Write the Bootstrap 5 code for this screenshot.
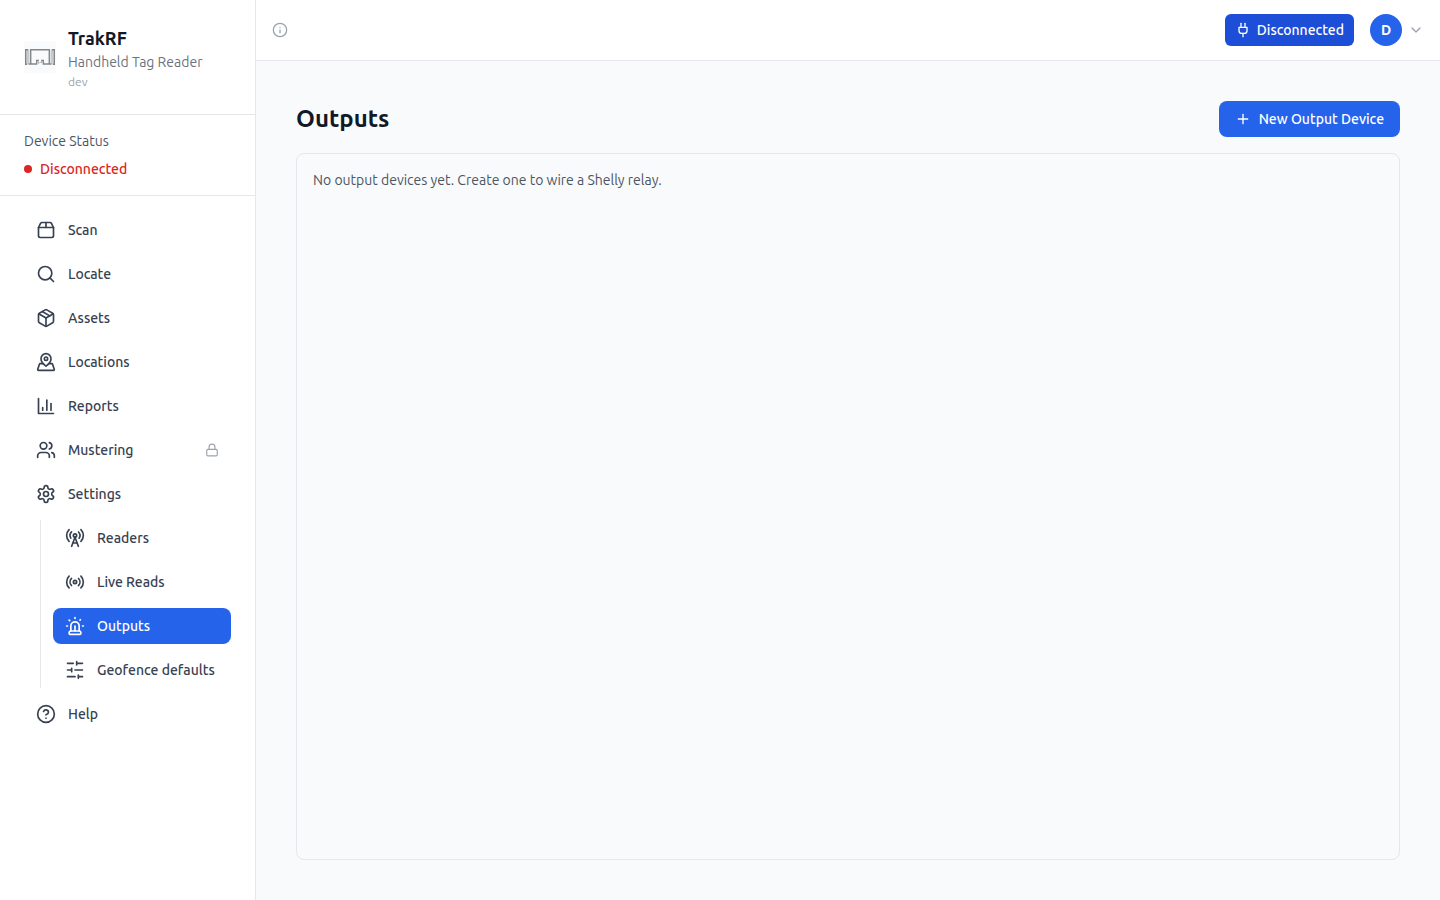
<!DOCTYPE html>
<html lang="en">
<head>
<meta charset="utf-8">
<meta name="viewport" content="width=device-width, initial-scale=1">
<title>TrakRF – Outputs</title>
<link href="https://cdn.jsdelivr.net/npm/bootstrap@5.3.0/dist/css/bootstrap.min.css" rel="stylesheet">
<style>
  :root { --line: #e5e7eb; --blue: #2563eb; --blue-dark: #1d4ed8; --ink: #111827; }
  body { font-family: Ubuntu, "Noto Sans", sans-serif; font-size: 14px; line-height: 20px; background: #f9fafb; color: var(--ink); }
  svg.ico { fill: none; stroke: currentColor; stroke-width: 2; stroke-linecap: round; stroke-linejoin: round; width: 20px; height: 20px; flex: none; }
  svg.ico-md { width: 16px; height: 16px; }
  svg.ico-sm { width: 14px; height: 14px; }
  .line-b { border-bottom: 1px solid var(--line); }
  .medium { font-weight: 500; }
  .text-soft { color: #6b7280; }
  .text-mid { color: #4b5563; }
  .text-faint { color: #9ca3af; }

  .sidebar { width: 256px; border-right: 1px solid var(--line); }
  .brand-logo { width: 32px; height: 32px; flex: none; }
  .brand-name { font-size: 18px; line-height: 28px; font-weight: 600; }
  .version { font-size: 12px; line-height: 16px; margin-top: 2px; }
  .status-dot { width: 8px; height: 8px; background: #dc2626; }
  .status-text { color: #dc2626; }

  .side-nav .nav-link { display: flex; align-items: center; gap: 12px; padding: 8px 12px; border-radius: 8px; color: #374151; font-weight: 500; }
  .side-nav .nav-link:hover { background: #f3f4f6; }
  .side-nav .nav-link.active { background: var(--blue); color: #fff; }
  .sub-nav { margin-left: 16px; padding-left: 12px; border-left: 1px solid var(--line); }

  .topbar { height: 61px; }
  .btn-app { display: inline-flex; align-items: center; border: 0; font-size: 14px; line-height: 20px; font-weight: 500; color: #fff; background: var(--blue); border-radius: 8px; gap: 8px; padding: 8px 16px; }
  .btn-app:hover { background: var(--blue-dark); color: #fff; }
  .btn-connect { background: var(--blue-dark); border-radius: 6px; gap: 6px; padding: 6px 10px; }
  .avatar { width: 32px; height: 32px; background: var(--blue); font-size: 14px; line-height: 20px; font-weight: 600; }
  .user-menu { gap: 6px; }
  .page { padding: 40px; }
  .page-title { font-size: 24px; line-height: 32px; font-weight: 600; }
  .panel { border: 1px solid var(--line); border-radius: 8px; }
</style>
</head>
<body>
<div class="d-flex min-vh-100">
  <aside class="sidebar bg-white flex-shrink-0">
    <div class="d-flex align-items-center p-4 line-b">
      <svg class="brand-logo me-2" viewBox="0 0 32 32" aria-hidden="true">
        <rect width="32" height="32" fill="#f9fafb"/>
        <path d="M4 8.500v15M28 8.500v15" stroke="#c9cacc" stroke-width="3"/>
        <g fill="none" stroke="#85868a" stroke-width="1.400">
          <path d="M4 8.700H1.700v14.600H3M28 8.700h2.300v14.600H29"/>
          <path d="M6.700 23V8.800h18.600V23"/>
          <path d="M4.700 23h8v-3.500H15M27.300 23h-8v-3.500H17"/>
          <path d="M14 21.800h1.500M16.500 21.300h1.500" stroke-width="1"/>
        </g>
      </svg>
      <div class="ms-1">
        <div class="brand-name">TrakRF</div>
        <div class="text-soft">Handheld Tag Reader</div>
        <div class="version text-faint">dev</div>
      </div>
    </div>

    <div class="px-4 py-3 line-b">
      <div class="text-mid mb-2">Device Status</div>
      <div class="d-flex align-items-center gap-2">
        <span class="status-dot rounded-circle"></span>
        <span class="status-text medium">Disconnected</span>
      </div>
    </div>

    <nav class="side-nav px-4 py-3" aria-label="Main">
      <ul class="nav flex-column flex-nowrap gap-2">
        <li><a class="nav-link" href="#scan"><svg class="ico" viewBox="0 0 24 24"><path d="M3 9h18v10a2 2 0 0 1-2 2H5a2 2 0 0 1-2-2V9Z"/><path d="m3 9 2.450-4.900A2 2 0 0 1 7.240 3h9.520a2 2 0 0 1 1.800 1.100L21 9"/><path d="M12 3v6"/></svg>Scan</a></li>
        <li><a class="nav-link" href="#locate"><svg class="ico" viewBox="0 0 24 24"><circle cx="11" cy="11" r="8"/><path d="m21 21-4.300-4.300"/></svg>Locate</a></li>
        <li><a class="nav-link" href="#assets"><svg class="ico" viewBox="0 0 24 24"><path d="m7.500 4.270 9 5.150"/><path d="M21 8a2 2 0 0 0-1-1.730l-7-4a2 2 0 0 0-2 0l-7 4A2 2 0 0 0 3 8v8a2 2 0 0 0 1 1.730l7 4a2 2 0 0 0 2 0l7-4A2 2 0 0 0 21 16Z"/><path d="m3.300 7 8.700 5 8.700-5"/><path d="M12 22V12"/></svg>Assets</a></li>
        <li><a class="nav-link" href="#locations"><svg class="ico" viewBox="0 0 24 24"><path d="M18 8c0 4.500-6 9-6 9s-6-4.500-6-9a6 6 0 0 1 12 0"/><circle cx="12" cy="8" r="2"/><path d="M8.835 14H5a1 1 0 0 0-.9.7l-2 6c-.1.1-.1.2-.1.3 0 .6.4 1 1 1h18c.6 0 1-.4 1-1 0-.1 0-.2-.1-.3l-2-6a1 1 0 0 0-.9-.7h-3.835"/></svg>Locations</a></li>
        <li><a class="nav-link" href="#reports"><svg class="ico" viewBox="0 0 24 24"><path d="M3 3v18h18"/><path d="M18 17V9"/><path d="M13 17V5"/><path d="M8 17v-3"/></svg>Reports</a></li>
        <li><a class="nav-link" href="#mustering"><svg class="ico" viewBox="0 0 24 24"><path d="M16 21v-2a4 4 0 0 0-4-4H6a4 4 0 0 0-4 4v2"/><circle cx="9" cy="7" r="4"/><path d="M22 21v-2a4 4 0 0 0-3-3.870"/><path d="M16 3.130a4 4 0 0 1 0 7.750"/></svg>Mustering<svg class="ico ico-sm text-faint ms-auto" viewBox="0 0 24 24"><rect x="3" y="11" width="18" height="11" rx="2"/><path d="M7 11V7a5 5 0 0 1 10 0v4"/></svg></a></li>
        <li><a class="nav-link" href="#settings"><svg class="ico" viewBox="0 0 24 24"><path d="M12.220 2h-.44a2 2 0 0 0-2 2v.18a2 2 0 0 1-1 1.730l-.43.25a2 2 0 0 1-2 0l-.15-.08a2 2 0 0 0-2.730.73l-.22.38a2 2 0 0 0 .73 2.730l.15.1a2 2 0 0 1 1 1.720v.51a2 2 0 0 1-1 1.740l-.15.09a2 2 0 0 0-.73 2.730l.22.38a2 2 0 0 0 2.730.73l.15-.08a2 2 0 0 1 2 0l.43.25a2 2 0 0 1 1 1.730V20a2 2 0 0 0 2 2h.44a2 2 0 0 0 2-2v-.18a2 2 0 0 1 1-1.730l.43-.25a2 2 0 0 1 2 0l.15.08a2 2 0 0 0 2.730-.73l.22-.39a2 2 0 0 0-.73-2.730l-.15-.08a2 2 0 0 1-1-1.740v-.5a2 2 0 0 1 1-1.740l.15-.09a2 2 0 0 0 .73-2.730l-.22-.38a2 2 0 0 0-2.730-.73l-.15.08a2 2 0 0 1-2 0l-.43-.25a2 2 0 0 1-1-1.730V4a2 2 0 0 0-2-2z"/><circle cx="12" cy="12" r="3"/></svg>Settings</a></li>
        <li>
          <ul class="sub-nav nav flex-column flex-nowrap gap-2">
            <li><a class="nav-link" href="#readers"><svg class="ico" viewBox="0 0 24 24"><path d="M4.900 16.100C1 12.200 1 5.800 4.900 1.900"/><path d="M7.800 4.700a6.140 6.140 0 0 0-.8 7.500"/><circle cx="12" cy="9" r="2"/><path d="M16.200 4.800c2 2 2.260 5.110.8 7.470"/><path d="M19.100 1.900a9.960 9.960 0 0 1 0 14.100"/><path d="M9.500 18h5"/><path d="m8 22 4-11 4 11"/></svg>Readers</a></li>
            <li><a class="nav-link" href="#live-reads"><svg class="ico" viewBox="0 0 24 24"><path d="M4.900 19.100C1 15.200 1 8.800 4.900 4.900"/><path d="M7.800 16.200c-2.300-2.300-2.300-6.100 0-8.500"/><circle cx="12" cy="12" r="2"/><path d="M16.200 7.800c2.300 2.300 2.300 6.100 0 8.500"/><path d="M19.100 4.900C23 8.800 23 15.100 19.100 19"/></svg>Live Reads</a></li>
            <li><a class="nav-link active" href="#outputs" aria-current="page"><svg class="ico" viewBox="0 0 24 24"><path d="M7 18v-6a5 5 0 1 1 10 0v6"/><path d="M5 21a1 1 0 0 0 1 1h12a1 1 0 0 0 1-1v-1a2 2 0 0 0-2-2H7a2 2 0 0 0-2 2z"/><path d="M21 12h1"/><path d="M18.500 4.500 18 5"/><path d="M2 12h1"/><path d="M12 2v1"/><path d="m4.929 4.929.707.707"/><path d="M12 12v6"/></svg>Outputs</a></li>
            <li><a class="nav-link" href="#geofence"><svg class="ico" viewBox="0 0 24 24"><path d="M21 4h-7M10 4H3M21 12h-9M8 12H3M21 20h-5M12 20H3M14 2v4M8 10v4M16 18v4"/></svg>Geofence defaults</a></li>
          </ul>
        </li>
        <li><a class="nav-link" href="#help"><svg class="ico" viewBox="0 0 24 24"><circle cx="12" cy="12" r="10"/><path d="M9.090 9a3 3 0 0 1 5.830 1c0 2-3 3-3 3"/><path d="M12 17h.01"/></svg>Help</a></li>
      </ul>
    </nav>
  </aside>

  <div class="d-flex flex-column flex-grow-1">
    <header class="topbar bg-white line-b d-flex align-items-center justify-content-between px-3">
      <button type="button" class="btn p-0 border-0 d-flex text-faint" aria-label="About this page">
        <svg class="ico ico-md" viewBox="0 0 24 24"><circle cx="12" cy="12" r="10"/><path d="M12 16v-4"/><path d="M12 8h.01"/></svg>
      </button>
      <div class="d-flex align-items-center gap-3">
        <button type="button" class="btn btn-app btn-connect">
          <svg class="ico ico-md" viewBox="0 0 24 24"><path d="M12 22v-5"/><path d="M9 8V2"/><path d="M15 8V2"/><path d="M18 8v5a4 4 0 0 1-4 4h-4a4 4 0 0 1-4-4V8Z"/></svg>Disconnected
        </button>
        <button type="button" class="user-menu btn p-0 border-0 d-flex align-items-center" aria-label="Account menu">
          <span class="avatar rounded-circle text-white d-flex align-items-center justify-content-center">D</span>
          <svg class="ico ico-md text-faint" viewBox="0 0 24 24"><path d="m6 9 6 6 6-6"/></svg>
        </button>
      </div>
    </header>

    <main class="page d-flex flex-column flex-grow-1">
      <div class="d-flex align-items-center justify-content-between mb-3">
        <h1 class="page-title m-0">Outputs</h1>
        <button type="button" class="btn btn-app">
          <svg class="ico ico-md" viewBox="0 0 24 24"><path d="M5 12h14"/><path d="M12 5v14"/></svg>New Output Device
        </button>
      </div>
      <section class="panel flex-grow-1 p-3">
        <p class="text-mid m-0">No output devices yet. Create one to wire a Shelly relay.</p>
      </section>
    </main>
  </div>
</div>
<script src="https://cdn.jsdelivr.net/npm/bootstrap@5.3.0/dist/js/bootstrap.bundle.min.js"></script>
</body>
</html>
